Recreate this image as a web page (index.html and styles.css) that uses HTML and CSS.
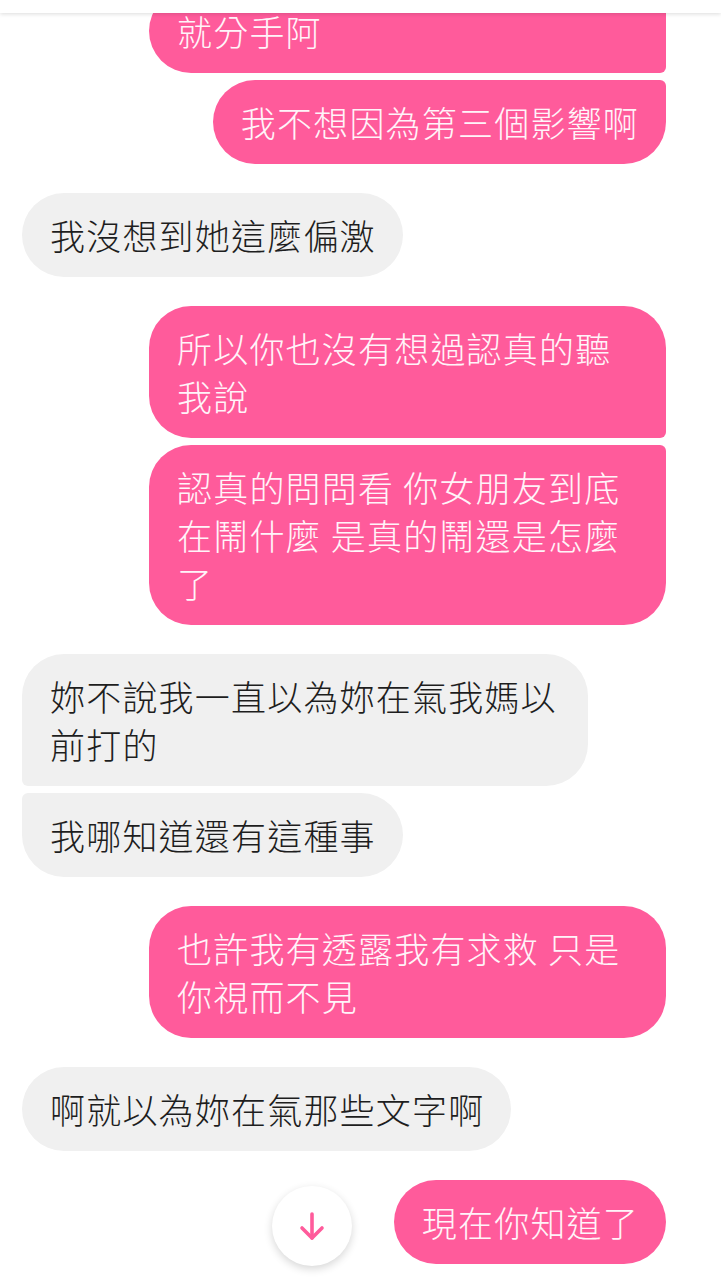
FILE: index.html
```html
<!DOCTYPE html>
<html lang="zh-Hant">
<head>
<meta charset="utf-8">
<title>Chat</title>
<link rel="stylesheet" href="styles.css">
</head>
<body>
<div class="screen">
  <div class="topbar"></div>
  <div class="chat">
    <div class="group">
      <div class="msg sent first-cut">就分手阿</div>
      <div class="msg sent tail-top">我不想因為第三個影響啊</div>
    </div>
    <div class="group">
      <div class="msg recv">我沒想到她這麼偏激</div>
    </div>
    <div class="group">
      <div class="msg sent tail-bottom">所以你也沒有想過認真的聽我說</div>
      <div class="msg sent tail-top">認真的問問看 你女朋友到底在鬧什麼 是真的鬧還是怎麼了</div>
    </div>
    <div class="group">
      <div class="msg recv tail-bottom">妳不說我一直以為妳在氣我媽以前打的</div>
      <div class="msg recv tail-top">我哪知道還有這種事</div>
    </div>
    <div class="group">
      <div class="msg sent">也許我有透露我有求救 只是你視而不見</div>
    </div>
    <div class="group">
      <div class="msg recv">啊就以為妳在氣那些文字啊</div>
    </div>
    <div class="group">
      <div class="msg sent">現在你知道了</div>
    </div>
  </div>
  <button class="scroll-down" aria-label="scroll down">
    <svg width="34" height="34" viewBox="0 0 34 34" fill="none" stroke="#ff5b9b" stroke-width="3.6" stroke-linecap="round" stroke-linejoin="round">
      <path d="M17 5 V29"/>
      <path d="M7 19 L17 29 L27 19"/>
    </svg>
  </button>
</div>
</body>
</html>
```

FILE: styles.css
```css
* { box-sizing: border-box; }
html, body {
  margin: 0;
  padding: 0;
  background: #ffffff;
}
.screen {
  position: relative;
  width: 721px;
  height: 1280px;
  overflow: hidden;
  background: #ffffff;
  font-family: "Noto Sans CJK TC", "Noto Sans CJK SC", "Noto Sans", sans-serif;
}
.topbar {
  position: absolute;
  top: 0;
  left: 0;
  right: 0;
  height: 13px;
  background: #ffffff;
  box-shadow: 0 1px 4px rgba(0, 0, 0, 0.14);
  z-index: 2;
}
.chat {
  display: flex;
  flex-direction: column;
  gap: 29px;
  margin-top: -11px;
}
.group {
  display: flex;
  flex-direction: column;
  gap: 7px;
}
.msg {
  font-size: 35px;
  letter-spacing: 1.2px;
  line-height: 48px;
  padding: 18px 27px 18px 28px;
  border-radius: 42px;
  font-weight: 300;
  word-break: break-all;
}
.msg.sent {
  align-self: flex-end;
  margin-right: 55px;
  max-width: 517px;
  background: #ff5b9b;
  color: #fff4f9;
}
.msg.recv {
  align-self: flex-start;
  margin-left: 22px;
  max-width: 566px;
  background: #f0f0f0;
  color: #1e1e1e;
}
.msg.sent.first-cut {
  width: 517px;
  border-top-right-radius: 6px;
  border-bottom-right-radius: 6px;
}
.msg.sent.tail-top { border-top-right-radius: 6px; }
.msg.sent.tail-bottom { border-bottom-right-radius: 6px; }
.msg.recv.tail-top { border-top-left-radius: 6px; }
.msg.recv.tail-bottom { border-bottom-left-radius: 6px; }
.scroll-down {
  position: absolute;
  left: 272px;
  top: 1186px;
  width: 80px;
  height: 80px;
  border: none;
  border-radius: 50%;
  background: #ffffff;
  box-shadow: 0 3px 8px rgba(0, 0, 0, 0.16);
  display: flex;
  align-items: center;
  justify-content: center;
  padding: 0;
}
.scroll-down svg {
  display: block;
}
```
